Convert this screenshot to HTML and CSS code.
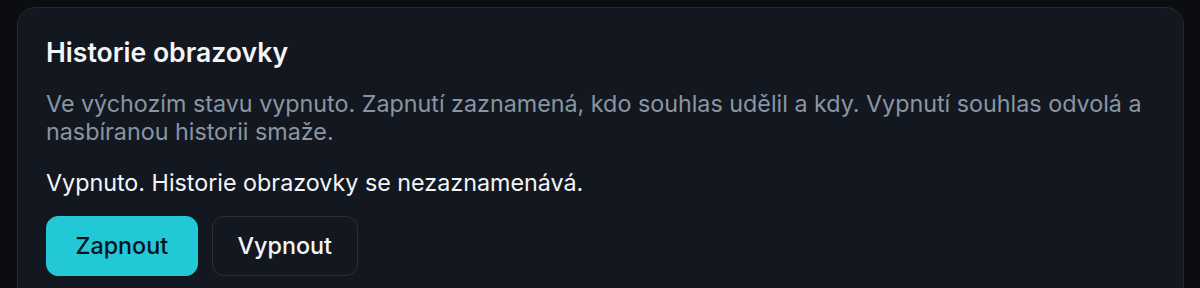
FILE: index.html
```html
<!DOCTYPE html>
<html lang="cs">
<head>
<meta charset="UTF-8">
<meta name="viewport" content="width=device-width, initial-scale=1.0">
<title>Historie obrazovky</title>
<link rel="stylesheet" href="styles.css">
</head>
<body>
<div class="card">
  <h2 class="title">Historie obrazovky</h2>
  <p class="desc">Ve výchozím stavu vypnuto. Zapnutí zaznamená, kdo souhlas udělil a kdy. Vypnutí souhlas odvolá a nasbíranou historii smaže.</p>
  <p class="status">Vypnuto. Historie obrazovky se nezaznamenává.</p>
  <div class="actions">
    <button class="btn btn-primary">Zapnout</button>
    <button class="btn btn-ghost">Vypnout</button>
  </div>
</div>
</body>
</html>
```

FILE: styles.css
```css
body {
  margin: 0;
  padding: 7px 16px 0 17px;
  background-color: #0b0d11;
  font-family: Inter, 'Noto Sans', sans-serif;
  color: #f3f5f7;
}
.card {
  background-color: #131820;
  border: 1px solid #232a33;
  border-radius: 18px;
  padding: 28px 28px 40px;
}
.title {
  margin: 0 0 22px;
  font-size: 26.6px;
  line-height: 32px;
  font-weight: 600;
  color: #f3f5f7;
}
.desc {
  margin: 0 0 23px;
  font-size: 23.3px;
  line-height: 28px;
  color: #8a95a3;
}
.status {
  margin: 0 0 19px;
  font-size: 23.3px;
  line-height: 28px;
  color: #f3f5f7;
}
.actions {
  display: flex;
  gap: 14px;
}
.btn {
  font-family: inherit;
  font-size: 23.3px;
  line-height: 28px;
  font-weight: 500;
  padding: 15px 28.5px;
  border-radius: 12px;
  cursor: pointer;
}
.btn-primary {
  background-color: #22c8d6;
  border: 1px solid #22c8d6;
  color: #0b1318;
}
.btn-ghost {
  padding: 15px 25px;
  background-color: transparent;
  border: 1px solid #29303a;
  color: #f3f5f7;
}
```
